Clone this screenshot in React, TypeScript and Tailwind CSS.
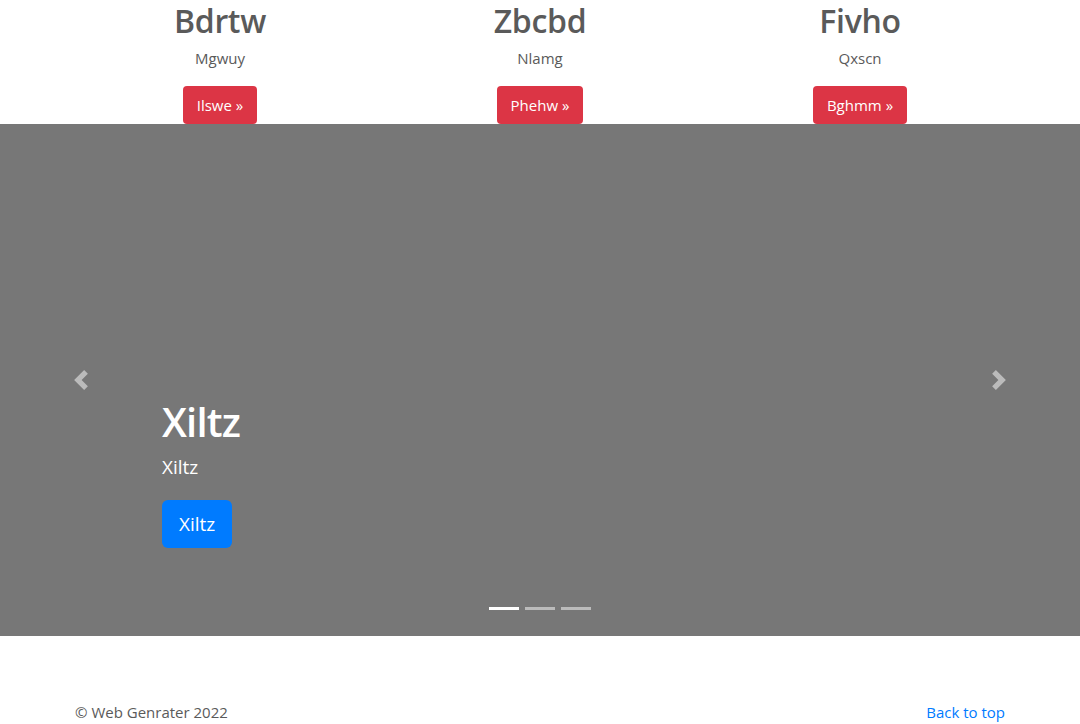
const columns = [
  { title: "Bdrtw", text: "Mgwuy", cta: "Ilswe" },
  { title: "Zbcbd", text: "Nlamg", cta: "Phehw" },
  { title: "Fivho", text: "Qxscn", cta: "Bghmm" },
];

function Chevron({ dir }: { dir: "prev" | "next" }) {
  const d =
    dir === "prev"
      ? "M5.25 0l-4 4 4 4 1.5-1.5-2.5-2.5 2.5-2.5-1.5-1.5z"
      : "M2.75 0l-1.5 1.5 2.5 2.5-2.5 2.5 1.5 1.5 4-4-4-4z";
  return (
    <svg viewBox="0 0 8 8" className="h-5 w-5" fill="#fff">
      <path d={d} />
    </svg>
  );
}

export default function App() {
  return (
    <div
      className="min-h-screen bg-white text-[#5a5a5a]"
      style={{ fontFamily: '"Open Sans", "Liberation Sans", sans-serif' }}
    >
      {/* Marketing columns */}
      <div className="mx-auto w-[960px] px-[15px]">
        <div className="-mx-[15px] grid grid-cols-3">
          {columns.map((c) => (
            <div key={c.title} className="flex flex-col items-center px-[15px] text-center">
              <h2 className="mb-1 text-[32px] leading-[42px] font-semibold tracking-[-0.01em]">{c.title}</h2>
              <p className="mx-3 mb-4 text-[15px] leading-6">{c.text}</p>
              <button className="h-[38px] rounded bg-[#dc3545] px-[14px] text-[15px] leading-6 text-white">
                {c.cta} &raquo;
              </button>
            </div>
          ))}
        </div>
      </div>

      {/* Carousel */}
      <div className="relative mb-16 flex h-[512px] bg-[#777]">
        <button className="flex w-[15%] items-center justify-center opacity-50">
          <Chevron dir="prev" />
        </button>
        <div className="flex flex-1 flex-col items-start justify-end pb-[88px] text-white">
          <h1 className="mb-1.5 text-[40px] leading-[48px] font-semibold tracking-[-0.02em]">Xiltz</h1>
          <p className="mb-[18px] text-[19px] leading-[30px]">Xiltz</p>
          <button className="h-12 rounded-md bg-[#007bff] px-[17px] text-[19px] leading-[30px] text-white">
            Xiltz
          </button>
        </div>
        <button className="flex w-[15%] items-center justify-center opacity-50">
          <Chevron dir="next" />
        </button>
        <div className="absolute bottom-[26px] left-0 right-0 flex justify-center gap-[6px]">
          <span className="h-[3px] w-[30px] bg-white" />
          <span className="h-[3px] w-[30px] bg-white/50" />
          <span className="h-[3px] w-[30px] bg-white/50" />
        </div>
      </div>

      {/* Footer */}
      <footer className="mx-auto flex w-[960px] justify-between px-[15px] text-[15px] leading-6">
        <p>&copy; Web Genrater 2022</p>
        <a href="#" className="text-[#007bff]">
          Back to top
        </a>
      </footer>
    </div>
  );
}
